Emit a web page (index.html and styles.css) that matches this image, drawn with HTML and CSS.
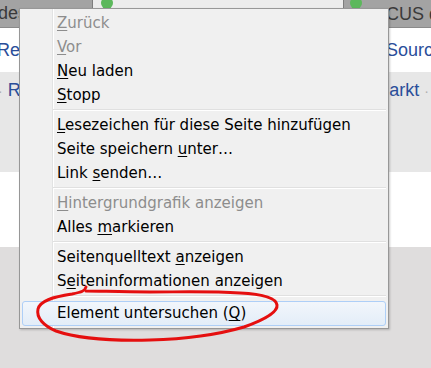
FILE: index.html
```html
<!DOCTYPE html>
<html lang="de">
<head>
    <meta charset="UTF-8">
    <title>Kontextmenü</title>
    <link rel="stylesheet" href="styles.css">
</head>
<body>
    <div class="page">
        <div class="tabs">
            <div class="tab tab-left"><span class="tab-text">des</span></div>
            <div class="tab tab-active"><span class="dot"></span></div>
            <div class="tab tab-right"><span class="dot"></span><span class="tab-text">CUS d</span></div>
        </div>
        <div class="toolbar">
            <span class="link">Rev</span>
            <span class="link">Source</span>
        </div>
        <div class="navbar">
            <span class="link"><span class="sep">·</span> R</span>
            <span class="link">arkt <span class="sep">·</span></span>
        </div>
        <div class="content"></div>
        <div class="footer"></div>
    </div>

    <div class="menu">
        <div class="item disabled"><u>Z</u>urück</div>
        <div class="item disabled"><u>V</u>or</div>
        <div class="item"><u>N</u>eu laden</div>
        <div class="item"><u>S</u>topp</div>
        <div class="separator"></div>
        <div class="item"><u>L</u>esezeichen für diese Seite hinzufügen</div>
        <div class="item">Seite speichern <u>u</u>nter…</div>
        <div class="item">Link <u>s</u>enden…</div>
        <div class="separator"></div>
        <div class="item disabled"><u>H</u>intergrundgrafik anzeigen</div>
        <div class="item">Alles <u>m</u>arkieren</div>
        <div class="separator"></div>
        <div class="item">Seitenquelltext <u>a</u>nzeigen</div>
        <div class="item">S<u>e</u>iteninformationen anzeigen</div>
        <div class="separator"></div>
        <div class="item hover">Element untersuchen (<u>Q</u>)</div>
    </div>

    <!-- red marker drawn round the last entry -->
    <svg class="marker" width="431" height="368" viewBox="0 0 431 368">
        <path d="M86 287 C85 291 82 292 72 294 C52 297 40 301 38 309 C36 318 44 326 56 331 C76 338 110 341 150 340 C190 339 220 334 244 327 C264 320 278 312 277 305 C276 298 262 294 240 293 C210 291 180 292 150 292 C120 292 100 291 86 291"
              fill="none" stroke="#e50f0f" stroke-width="3" stroke-linecap="round" stroke-linejoin="round"/>
    </svg>
</body>
</html>
```

FILE: styles.css
```css
body { margin: 0; font-family: "Liberation Sans", Arial, sans-serif; }
.page { width: 431px; height: 368px; overflow: hidden; display: flex; flex-direction: column; }

.tabs { display: flex; height: 27px; background: #a3a3a3; border-bottom: 1px solid #8a8a8a; }
.tab { display: flex; align-items: center; gap: 6px; font-size: 18px; color: #3a3a3a; overflow: hidden; white-space: nowrap; }
.tab-left { width: 92px; border-right: 1px solid #7d7d7d; }
.tab-left .tab-text { margin-left: -2px; }
.tab-active { width: 250px; background: #ececec; align-items: flex-start; padding-left: 8px; box-sizing: border-box; }
.tab-right { flex: 1; align-items: flex-start; padding-left: 6px; border-left: 1px solid #7d7d7d; }
.tab-right .tab-text { margin-top: 4px; margin-left: 18px; }
.dot { display: block; width: 12px; height: 12px; border-radius: 50%; background: #5cb85c; margin-top: -3px; flex: none; }

.toolbar { height: 44px; background: #fff; display: flex; justify-content: space-between; align-items: center; }
.navbar { height: 100px; background: #e7e7e7; display: flex; justify-content: space-between; align-items: flex-start; padding-top: 8px; box-sizing: border-box; }
.link { color: #2a4e9a; font-size: 18px; white-space: nowrap; }
.toolbar .link:first-child { margin-left: -3px; }
.toolbar .link:last-child { margin-right: -12px; }
.navbar .link:first-child { margin-left: -2px; }
.navbar .link:last-child { margin-right: 2px; }
.sep { color: #b0b0b0; font-size: 14px; }
.content { height: 75px; background: #fff; }
.footer { flex: 1; background: #dfdddd; }

.menu { position: absolute; left: 19px; top: 8px; width: 368px; padding: 2px 0 2px; font-family: "DejaVu Sans", sans-serif; background: #f0f0f0 linear-gradient(to right, transparent 32px, #e2e3e3 32px, #e2e3e3 33px, #fff 33px, #fff 34px, transparent 34px); border: 1px solid #979797; box-shadow: 1px 1px 2px rgba(0, 0, 0, 0.2); }
.item { height: 24px; line-height: 24px; padding-left: 37px; font-size: 15px; color: #000; white-space: nowrap; }
.item.disabled { color: #8d8d8d; }
.item u { text-decoration-thickness: 1px; text-underline-offset: 2px; }
.separator { height: 6px; margin-left: 33px; margin-right: 2px; background: linear-gradient(to bottom, transparent 2px, #e0e0e0 2px, #e0e0e0 3px, #fff 3px, #fff 4px, transparent 4px); }
.item.hover { height: 23px; line-height: 23px; margin: 2px 2px 0; padding-left: 34px; border: 1px solid #aecff7; border-radius: 3px; background: linear-gradient(to bottom, #f2f6fb, #e3edf8); }

.marker { position: absolute; left: 0; top: 0; pointer-events: none; }
```
